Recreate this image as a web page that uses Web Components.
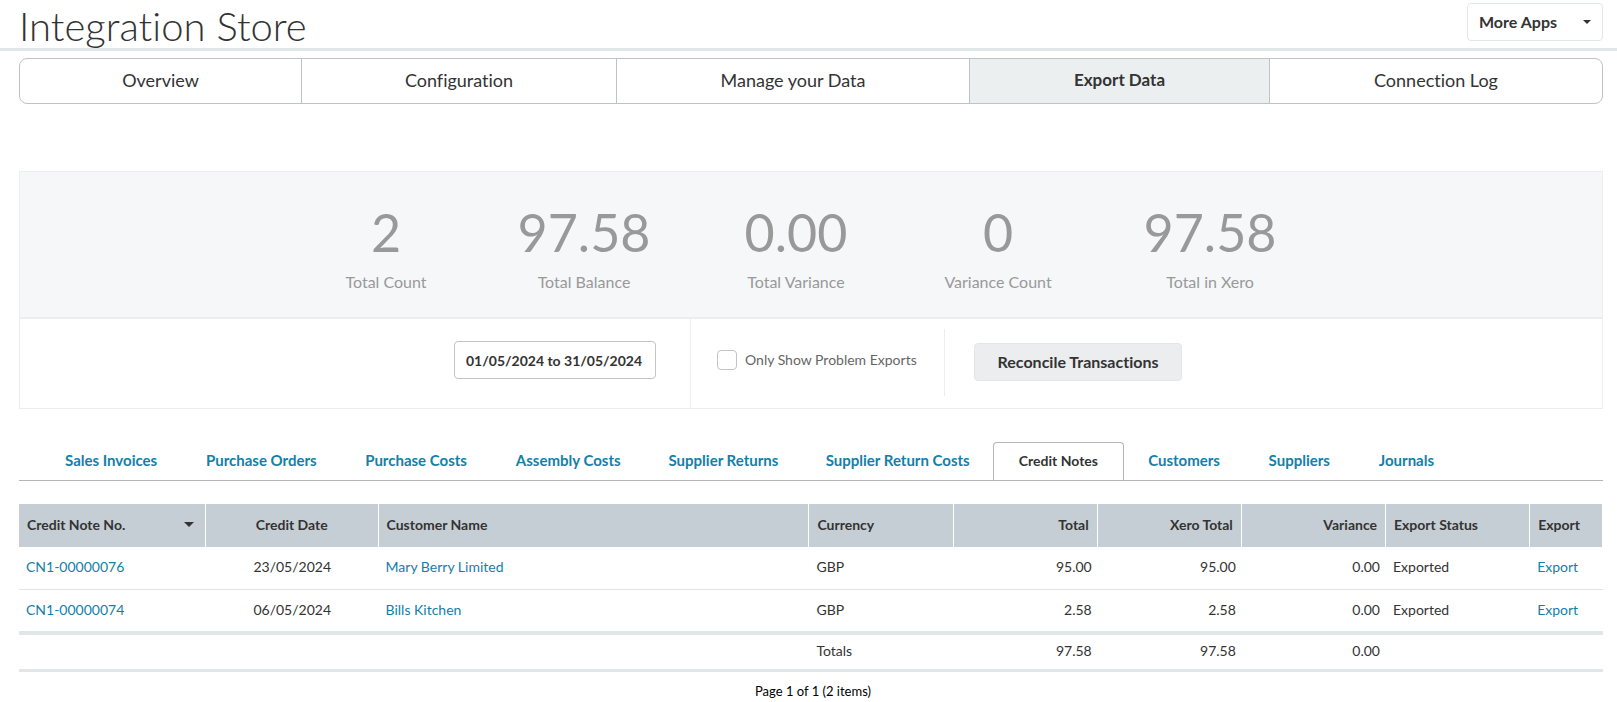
<!DOCTYPE html>
<html lang="en">
<head>
<meta charset="utf-8">
<title>Integration Store</title>
<style>
  body { margin: 0; background: #fff; color: #333; font-family: Lato, "Open Sans", sans-serif; font-size: 14px; line-height: 20px; font-variant-ligatures: none; }
  main { padding: 7px 14px 0 19px; }
</style>
</head>
<body>
<store-header heading="Integration Store"></store-header>
<main>
  <section-nav></section-nav>
  <export-summary>
    <stat-figure slot="stats" value="2">Total Count</stat-figure>
    <stat-figure slot="stats" value="97.58">Total Balance</stat-figure>
    <stat-figure slot="stats" value="0.00">Total Variance</stat-figure>
    <stat-figure slot="stats" value="0">Variance Count</stat-figure>
    <stat-figure slot="stats" value="97.58">Total in Xero</stat-figure>
  </export-summary>
  <record-tabs></record-tabs>
  <credit-table></credit-table>
  <page-status>Page 1 of 1 (2 items)</page-status>
</main>
<script>
  const define = (name, render) => customElements.define(name, class extends HTMLElement {
    connectedCallback() {
      if (!this.shadowRoot) this.attachShadow({ mode: 'open' }).innerHTML =
        '<style>*{box-sizing:border-box}:host{display:block}</style>' + render(this);
    }
  });

  define('store-header', el => `
    <style>
      header { display: flex; justify-content: space-between; align-items: flex-start; height: 51px; padding: 3px 14px 0 19px; border-bottom: 3px solid #e1e6e8; }
      h1 { margin: 0; font-size: 40px; line-height: 46px; font-weight: 300; color: #333; }
      .menu { display: grid; width: 136px; }
      select, svg { grid-area: 1 / 1; }
      select { appearance: none; height: 38px; padding: 0 11px; border: 1px solid #e1e6e8; border-radius: 4px; background: #fff; color: #333; font: bold 16px/20px Lato, sans-serif; }
      svg { place-self: center end; margin-right: 12px; pointer-events: none; }
    </style>
    <header>
      <h1>${el.getAttribute('heading')}</h1>
      <div class="menu">
        <select aria-label="More Apps"><option>More Apps</option></select>
        <svg width="8" height="4" viewBox="0 0 8 4"><path d="M0 0h8L4 4z" fill="#333"/></svg>
      </div>
    </header>`);

  define('section-nav', () => `
    <style>
      nav { display: grid; grid-template-columns: 281fr 315fr 353fr 300fr 333fr; border: 1px solid #bfc3c6; border-radius: 8px; overflow: hidden; }
      a { padding: 9px 0 11px; text-align: center; color: #333; text-decoration: none; font-size: 18px; line-height: 24px; }
      a + a { border-left: 1px solid #bfc3c6; }
      .on { background: #ebeff0; font-weight: bold; font-size: 17px; }
    </style>
    <nav>
      <a href="#overview">Overview</a><a href="#configuration">Configuration</a><a href="#manage">Manage your Data</a><a class="on" aria-current="page" href="#export">Export Data</a><a href="#log">Connection Log</a>
    </nav>`);

  define('stat-figure', el => `
    <style>
      :host { text-align: center; color: #999; white-space: nowrap; }
      .value { font-size: 52px; line-height: 60px; }
      .label { font-size: 16px; line-height: 20px; margin-top: 10px; }
    </style>
    <div class="value">${el.getAttribute('value')}</div>
    <div class="label"><slot></slot></div>`);

  define('export-summary', () => `
    <style>
      :host { margin-top: 67px; border: 1px solid #ebeef0; }
      .stats { display: grid; grid-template-columns: 78px 126px 106px 106px 126px; column-gap: 96px; justify-content: center; justify-items: center; padding: 30px 2px 25px 0; background: #f5f7f9; border-bottom: 2px solid #ebeef0; }
      .filters { display: flex; justify-content: center; height: 89px; padding-left: 14px; }
      .date { padding: 22px 34px 0 0; border-right: 1px solid #ebeef0; }
      input[type=text] { display: block; width: 202px; height: 38px; padding: 0 11px; border: 1px solid #c4c4c4; border-radius: 4px; color: #333; font: bold 14px/20px Lato, sans-serif; }
      .check { display: flex; align-items: flex-start; gap: 8px; width: 254px; height: 67px; margin-top: 10px; padding: 21px 0 0 26px; border-right: 1px solid #ebeef0; color: #666; white-space: nowrap; }
      .check input { appearance: none; width: 20px; height: 20px; margin: 0; border: 1px solid #c4c4c4; border-radius: 4px; background: #fff; }
      button { width: 208px; height: 38px; margin: 24px 0 0 29px; border: 1px solid #e1e6e8; border-radius: 4px; background: #ebedef; color: #333; font: bold 16px/20px Lato, sans-serif; font-variant-ligatures: none; }
    </style>
    <div class="stats"><slot name="stats"></slot></div>
    <div class="filters">
      <div class="date"><input type="text" aria-label="Date range" value="01/05/2024 to 31/05/2024"></div>
      <div class="check"><input type="checkbox" id="problems"><label for="problems">Only Show Problem Exports</label></div>
      <button type="button">Reconcile Transactions</button>
    </div>`);

  const tabs = ['Sales Invoices', 'Purchase Orders', 'Purchase Costs', 'Assembly Costs', 'Supplier Returns', 'Supplier Return Costs', 'Credit Notes', 'Customers', 'Suppliers', 'Journals'];
  define('record-tabs', () => `
    <style>
      :host { margin-top: 33px; border-bottom: 1px solid #b3b5b7; }
      nav { display: grid; grid-template-columns: 142fr 158fr 151fr 153fr 157fr 191fr 130fr 121fr 109fr 105fr; padding: 0 144px 0 21px; }
      a { height: 38px; padding-top: 7px; border: 1px solid transparent; border-bottom: 0; text-align: center; white-space: nowrap; color: #1380a8; font-size: 15px; font-weight: bold; text-decoration: none; }
      .on { padding-top: 8px; border-color: #b3b5b7; border-radius: 4px 4px 0 0; color: #333; font-size: 14px; }
    </style>
    <nav>${tabs.map(t => `<a href="#${t.toLowerCase().replaceAll(' ', '-')}"${t === 'Credit Notes' ? ' class="on" aria-current="page"' : ''}>${t}</a>`).join('')}</nav>`);

  const notes = [
    ['CN1-00000076', '23/05/2024', 'Mary Berry Limited', '95.00'],
    ['CN1-00000074', '06/05/2024', 'Bills Kitchen', '2.58']
  ];
  define('credit-table', () => `
    <style>
      :host { margin-top: 23px; }
      table { width: 100%; border-collapse: separate; border-spacing: 0; table-layout: fixed; }
      th { height: 43px; padding: 0 8px 2px; background: #c6ced5; border-right: 1px solid #fff; text-align: left; font-weight: bold; white-space: nowrap; }
      td { height: 43px; padding: 0 7px 2px; border-bottom: 1px solid #e1e4e6; }
      tbody tr:last-child td { height: 45px; border-bottom: 4px solid #e1e6e8; }
      tfoot td { height: 37px; border-bottom: 3px solid #e1e6e8; }
      th.num { text-align: right; }
      td.num { text-align: right; padding-right: 6px; }
      .mid { text-align: center; }
      a { color: #1380a8; text-decoration: none; }
      .sort { display: flex; justify-content: space-between; align-items: center; padding-right: 3px; }
    </style>
    <table>
      <colgroup><col style="width:11.8%"><col style="width:10.9%"><col><col style="width:9.1%"><col style="width:9.1%"><col style="width:9.1%"><col style="width:9.1%"><col style="width:9.1%"><col style="width:4.6%"></colgroup>
      <thead><tr>
        <th scope="col"><div class="sort">Credit Note No.<svg width="10" height="5" viewBox="0 0 10 5"><path d="M0 0h10L5 5z" fill="#333"/></svg></div></th>
        <th scope="col" class="mid">Credit Date</th><th scope="col">Customer Name</th><th scope="col">Currency</th>
        <th scope="col" class="num">Total</th><th scope="col" class="num">Xero Total</th><th scope="col" class="num">Variance</th>
        <th scope="col">Export Status</th><th scope="col">Export</th>
      </tr></thead>
      <tbody>${notes.map(([no, date, name, total]) => `<tr>
        <td><a href="#${no}">${no}</a></td><td class="mid">${date}</td><td><a href="#customer">${name}</a></td><td>GBP</td>
        <td class="num">${total}</td><td class="num">${total}</td><td class="num">0.00</td><td>Exported</td><td><a href="#export">Export</a></td></tr>`).join('')}
      </tbody>
      <tfoot><tr><td></td><td></td><td></td><td>Totals</td><td class="num">97.58</td><td class="num">97.58</td><td class="num">0.00</td><td></td><td></td></tr></tfoot>
    </table>`);

  define('page-status', () => `
    <style>:host { margin-top: 9px; padding-left: 4px; text-align: center; font-size: 13px; color: #000; }</style>
    <slot></slot>`);
</script>
</body>
</html>
